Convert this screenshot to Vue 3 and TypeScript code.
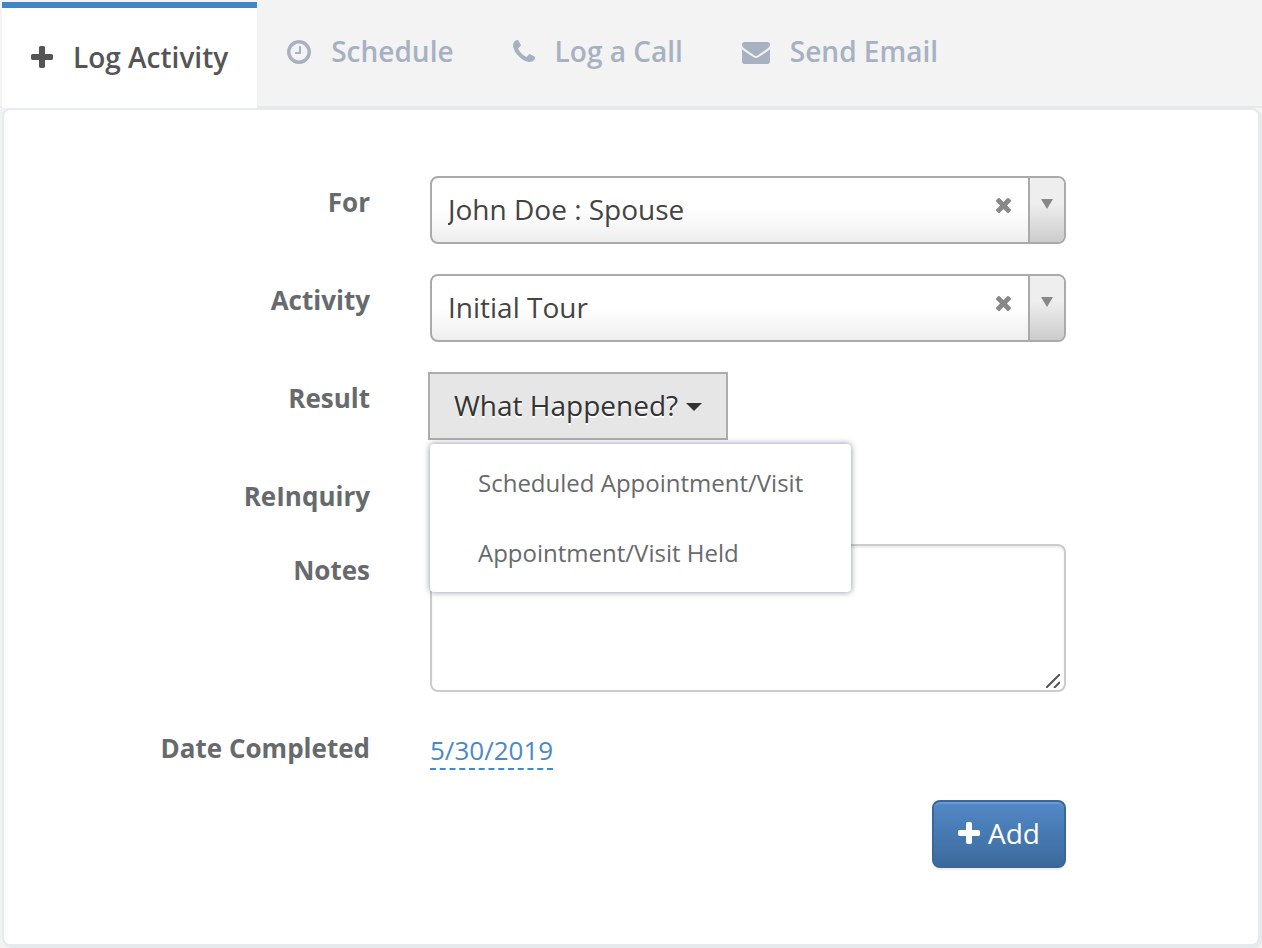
<script setup lang="ts">
import { ref } from 'vue'

interface Tab {
  label: string
  viewBox: string
  width: number
  path: string
}

const plusPath =
  'M1600 736v192q0 40-28 68t-68 28h-416v416q0 40-28 68t-68 28h-192q-40 0-68-28t-28-68v-416h-416q-40 0-68-28t-28-68v-192q0-40 28-68t68-28h416v-416q0-40 28-68t68-28h192q40 0 68 28t28 68v416h416q40 0 68 28t28 68z'
const timesPath =
  'M1490 1322q0 40-28 68l-136 136q-28 28-68 28t-68-28l-294-294-294 294q-28 28-68 28t-68-28l-136-136q-28-28-28-68t28-68l294-294-294-294q-28-28-28-68t28-68l136-136q28-28 68-28t68 28l294 294 294-294q28-28 68-28t68 28l136 136q28 28 28 68t-28 68l-294 294 294 294q28 28 28 68z'

const tabs: Tab[] = [
  { label: 'Log Activity', viewBox: '192 -128 1408 1920', width: 22, path: plusPath },
  {
    label: 'Schedule',
    viewBox: '128 -128 1536 1920',
    width: 24,
    path: 'M1024 544v448q0 14-9 23t-23 9h-320q-14 0-23-9t-9-23v-64q0-14 9-23t23-9h224v-352q0-14 9-23t23-9h64q14 0 23 9t9 23zm416 352q0-148-73-273t-198-198-273-73-273 73-198 198-73 273 73 273 198 198 273 73 273-73 198-198 73-273zm224 0q0 209-103 385.5t-279.5 279.5-385.5 103-385.5-103-279.5-279.5-103-385.5 103-385.5 279.5-279.5 385.5-103 385.5 103 279.5 279.5 103 385.5z',
  },
  {
    label: 'Log a Call',
    viewBox: '192 -128 1408 1920',
    width: 22,
    path: 'M1600 1240q0 27-10 70.5t-21 68.5q-21 50-122 106-94 51-186 51-27 0-53-3.5t-57-12.5-47-14.5-55.5-20.5-49.5-18q-98-35-175-83-127-79-264-216t-216-264q-48-77-83-175-3-9-18-49.5t-20.5-55.5-14.5-47-12.5-57-3.5-53q0-92 51-186 56-101 106-122 25-11 68.5-21t70.5-10q14 0 21 3 18 6 53 76 11 19 30 54t35 63.5 31 53.5q3 4 17.5 25t21.5 35.5 7 28.5q0 20-28.5 50t-62 55-62 53-28.5 46q0 9 5 22.5t8.5 20.5 14 24 11.5 19q76 137 174 235t235 174q2 1 19 11.5t24 14 20.5 8.5 22.5 5q18 0 46-28.5t53-62 55-62 50-28.5q14 0 28.5 7t35.5 21.5 25 17.5q25 15 53.5 31t63.5 35 54 30q70 35 76 53 3 7 3 21z',
  },
  {
    label: 'Send Email',
    viewBox: '0 -128 1792 1920',
    width: 28,
    path: 'M1792 710v794q0 66-47 113t-113 47h-1472q-66 0-113-47t-47-113v-794q44 49 101 87 362 246 497 345 57 42 92.5 65.5t94.5 48 110 24.5h2q51 0 110-24.5t94.5-48 92.5-65.5q170-123 498-345 57-39 100-87zm0-294q0 79-49 151t-122 123q-376 261-468 325-10 7-42.5 31t-54 38.5-52 32.5-57.5 27-50 9h-2q-23 0-50-9t-57.5-27-52-32.5-54-38.5-42.5-31q-91-64-262-182.5t-205-142.5q-62-42-117-115.5t-55-136.5q0-78 41.5-130t118.5-52h1472q65 0 112.5 47t47.5 113z',
  },
]

const activeTab = ref('Log Activity')
const person = ref('John Doe : Spouse')
const activity = ref('Initial Tour')
const notes = ref('')
const menuOpen = ref(true)
const results = ['Scheduled Appointment/Visit', 'Appointment/Visit Held']
</script>

<template>
  <main class="page">
    <nav class="tabs">
      <a
        v-for="tab in tabs"
        :key="tab.label"
        href="#"
        class="tab"
        :class="{ active: tab.label === activeTab }"
        @click.prevent="activeTab = tab.label"
      >
        <svg :width="tab.width" height="30" :viewBox="tab.viewBox" fill="currentColor" aria-hidden="true">
          <path :d="tab.path" />
        </svg>
        <span>{{ tab.label }}</span>
      </a>
    </nav>

    <form class="panel" @submit.prevent>
      <div class="row">
        <label class="label" for="person">For</label>
        <div class="combo">
          <select id="person" v-model="person">
            <option>John Doe : Spouse</option>
          </select>
          <button type="button" class="clear" aria-label="Clear person" @click="person = ''">
            <svg width="15" height="15" viewBox="302 366 1188 1188" fill="currentColor"><path :d="timesPath" /></svg>
          </button>
          <span class="arrow" aria-hidden="true">
            <svg width="12" height="10" viewBox="0 0 12 10" fill="currentColor"><path d="M0 0h12L6 10z" /></svg>
          </span>
        </div>
      </div>

      <div class="row">
        <label class="label" for="activity">Activity</label>
        <div class="combo">
          <select id="activity" v-model="activity">
            <option>Initial Tour</option>
          </select>
          <button type="button" class="clear" aria-label="Clear activity" @click="activity = ''">
            <svg width="15" height="15" viewBox="302 366 1188 1188" fill="currentColor"><path :d="timesPath" /></svg>
          </button>
          <span class="arrow" aria-hidden="true">
            <svg width="12" height="10" viewBox="0 0 12 10" fill="currentColor"><path d="M0 0h12L6 10z" /></svg>
          </span>
        </div>
      </div>

      <div class="row">
        <label class="label" for="result">Result</label>
        <div class="dropdown">
          <button id="result" type="button" class="toggle" :aria-expanded="menuOpen" @click="menuOpen = !menuOpen">
            <span>What Happened?</span>
            <svg width="16" height="12" viewBox="0 -4 16 12" fill="currentColor" aria-hidden="true"><path d="M0 0h16L8 8z" /></svg>
          </button>
          <div v-if="menuOpen" class="menu">
            <a v-for="item in results" :key="item" href="#" @click.prevent="menuOpen = false">{{ item }}</a>
          </div>
        </div>
      </div>

      <div class="row">
        <span class="label">ReInquiry</span>
      </div>

      <div class="row">
        <label class="label" for="notes">Notes</label>
        <div class="notes">
          <textarea id="notes" v-model="notes"></textarea>
          <svg class="grip" width="14" height="14" viewBox="0 0 14 14" stroke="#555" stroke-width="2" aria-hidden="true">
            <path d="M0 14L14 0M8 14l6-6" />
          </svg>
        </div>
      </div>

      <div class="row">
        <span class="label">Date Completed</span>
        <div class="date"><a href="#" @click.prevent>5/30/2019</a></div>
      </div>

      <div class="row">
        <div class="actions">
          <button type="submit" class="add">
            <svg width="22" height="22" viewBox="192 128 1408 1408" fill="currentColor" aria-hidden="true"><path :d="plusPath" /></svg>
            <span>Add</span>
          </button>
        </div>
      </div>
    </form>
  </main>
</template>

<style>
body {
  margin: 0;
  background: #f3f3f3;
}
</style>

<style scoped>
.page,
.page * {
  box-sizing: border-box;
}

.page {
  font-family: 'Open Sans', 'Noto Sans', sans-serif;
  font-size: 28px;
  line-height: 38px;
  color: #444;
  padding-bottom: 2px;
}

.page a {
  text-decoration: none;
}

.page svg {
  display: block;
  flex: none;
}

.tabs {
  display: flex;
  align-items: flex-start;
  gap: 1px;
  padding: 2px 2px 0;
  border-bottom: 2px solid #e7eaed;
}

.tab {
  display: flex;
  align-items: center;
  gap: 20px;
  height: 98px;
  padding: 0 29px;
  font-weight: 600;
  color: #a7b1c2;
  white-space: nowrap;
}

.tab.active {
  height: 106px;
  margin-bottom: -2px;
  padding-bottom: 2px;
  border-top: 6px solid #3f86c5;
  background: #fff;
  color: #555;
}

.panel {
  display: flex;
  flex-direction: column;
  gap: 30px;
  margin: 0 2px;
  padding: 66px 0 76px;
  border: 2px solid #e7eaed;
  border-radius: 8px;
  background: #fff;
  box-shadow: 2px 2px 0 #e7eaed;
}

.row {
  display: grid;
  grid-template-columns: minmax(0, 366fr) minmax(0, 636fr) minmax(0, 132fr);
  column-gap: 60px;
  align-items: start;
}

.label {
  height: 44px;
  padding-top: 7px;
  font-size: 26px;
  font-weight: 700;
  text-align: right;
  color: #676a6c;
}

.combo {
  position: relative;
  height: 68px;
}

.combo select {
  appearance: none;
  width: 100%;
  height: 100%;
  margin: 0;
  padding: 0 84px 2px 16px;
  border: 2px solid #aaa;
  border-radius: 8px;
  background: linear-gradient(to bottom, #fff 50%, #eee 100%);
  font: inherit;
  color: #444;
}

.clear {
  position: absolute;
  top: 18px;
  right: 51px;
  padding: 4px;
  border: 0;
  background: none;
  color: #888;
}

.arrow {
  position: absolute;
  top: 2px;
  right: 2px;
  bottom: 2px;
  width: 36px;
  display: flex;
  justify-content: center;
  padding-top: 21px;
  border-left: 2px solid #aaa;
  border-radius: 0 6px 6px 0;
  background: linear-gradient(to bottom, #eee 40%, #ccc 100%);
  color: #888;
  pointer-events: none;
}

.dropdown {
  position: relative;
  margin-left: -2px;
}

.toggle {
  display: flex;
  align-items: center;
  gap: 8px;
  height: 68px;
  padding: 0 24px 2px;
  border: 2px solid #adadad;
  background: #e6e6e6;
  font: inherit;
  color: #333;
  text-shadow: 0 2px 0 #fff;
  white-space: nowrap;
}

.menu {
  position: absolute;
  z-index: 1;
  top: 72px;
  left: 2px;
  padding: 4px 0;
  border-radius: 4px;
  background: #fff;
  box-shadow: 0 0 6px rgba(86, 96, 117, 0.7);
}

.menu a {
  display: block;
  padding: 16px 48px;
  font-size: 24px;
  color: #676a6c;
  white-space: nowrap;
}

.notes {
  position: relative;
}

.notes textarea {
  display: block;
  width: 100%;
  height: 148px;
  padding: 8px 12px;
  border: 2px solid #ccc;
  border-radius: 8px;
  background: #fff;
  box-shadow: inset 0 2px 2px rgba(0, 0, 0, 0.075);
  font: inherit;
  color: #555;
  resize: vertical;
}

.notes textarea::-webkit-resizer {
  background: transparent;
}

.grip {
  position: absolute;
  right: 6px;
  bottom: 4px;
  pointer-events: none;
}

.date {
  padding-top: 10px;
}

.date a {
  display: inline-block;
  height: 38px;
  border-bottom: 2px dashed #428bca;
  font-size: 26px;
  line-height: 36px;
  color: #4a89c8;
  vertical-align: top;
}

.actions {
  grid-column: 2;
  display: flex;
  justify-content: flex-end;
}

.add {
  display: flex;
  align-items: center;
  gap: 8px;
  height: 68px;
  padding: 0 24px 2px;
  border: 2px solid #3a6698;
  border-radius: 8px;
  background: linear-gradient(to bottom, #5289c8, #3c6a9c);
  box-shadow: inset 0 2px 0 rgba(255, 255, 255, 0.15), 0 2px 2px rgba(0, 0, 0, 0.075);
  font: inherit;
  color: #fff;
}
</style>
